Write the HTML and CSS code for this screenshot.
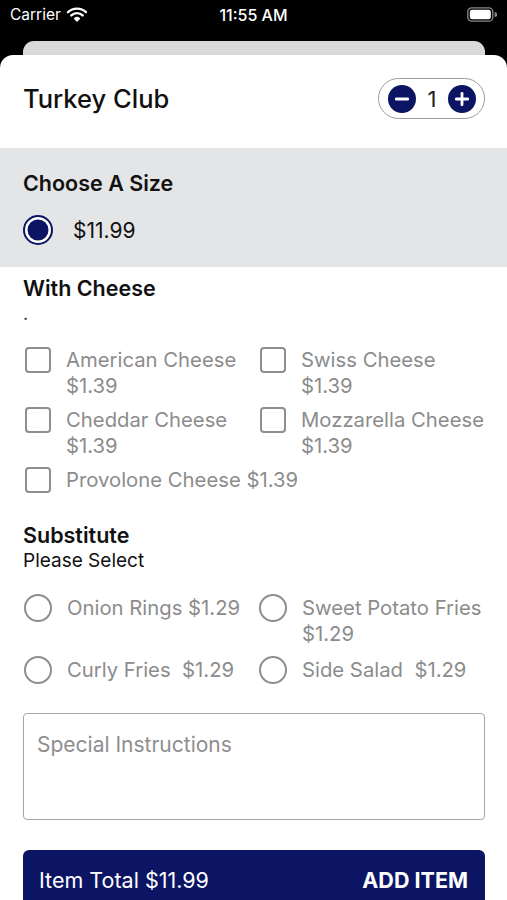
FILE: index.html
```html
<!DOCTYPE html>
<html lang="en">
<head>
  <meta charset="UTF-8">
  <meta name="viewport" content="width=device-width, initial-scale=1.0">
  <title>Turkey Club</title>
  <link rel="stylesheet" href="styles.css">
</head>
<body>
  <div class="status-bar">
    <div class="status-left">
      <span>Carrier</span>
      <svg class="wifi" width="20" height="15" viewBox="0 0 20 15">
        <path d="M1 5.2 A13 13 0 0 1 19 5.2" fill="none" stroke="white" stroke-width="2.4" stroke-linecap="round"/>
        <path d="M4.3 8.4 A8.4 8.4 0 0 1 15.7 8.4" fill="none" stroke="white" stroke-width="2.4" stroke-linecap="round"/>
        <path d="M7.6 11.5 A3.8 3.8 0 0 1 12.4 11.5 L10 14 Z" fill="white" stroke="white" stroke-width="1.4" stroke-linejoin="round"/>
      </svg>
    </div>
    <div class="status-time">11:55 AM</div>
    <div class="status-right">
      <svg width="30" height="15" viewBox="0 0 30 15">
        <rect x="0.8" y="0.8" width="25" height="13.4" rx="4" fill="none" stroke="#8a8a8a" stroke-width="1.3"/>
        <rect x="2.8" y="2.8" width="21" height="9.4" rx="2.2" fill="white"/>
        <path d="M27.6 5 a2.2 2.2 0 0 1 0 5 z" fill="#8a8a8a"/>
      </svg>
    </div>
  </div>

  <div class="back-card"></div>

  <div class="sheet">
    <div class="item-header">
      <h1 class="item-title">Turkey Club</h1>
      <div class="stepper">
        <svg width="28" height="28" viewBox="0 0 28 28">
          <circle cx="14" cy="14" r="14" fill="#0b1563"/>
          <rect x="7" y="12.6" width="14" height="2.8" rx="1.2" fill="white"/>
        </svg>
        <span class="stepper-count">1</span>
        <svg width="28" height="28" viewBox="0 0 28 28">
          <circle cx="14" cy="14" r="14" fill="#0b1563"/>
          <rect x="7" y="12.6" width="14" height="2.8" rx="1.2" fill="white"/>
          <rect x="12.6" y="7" width="2.8" height="14" rx="1.2" fill="white"/>
        </svg>
      </div>
    </div>

    <div class="size-section">
      <h2 class="section-title">Choose A Size</h2>
      <div class="size-option">
        <svg width="30" height="30" viewBox="0 0 30 30">
          <circle cx="15" cy="15" r="14" fill="white" stroke="#0b1563" stroke-width="2"/>
          <circle cx="15" cy="15" r="10.5" fill="#0b1563"/>
        </svg>
        <span>$11.99</span>
      </div>
    </div>

    <div class="options">
      <h2 class="section-title">With Cheese</h2>
      <div class="section-note">.</div>
      <div class="choice-grid cheese-grid">
        <label class="choice"><span class="checkbox"></span><span>American Cheese $1.39</span></label>
        <label class="choice"><span class="checkbox"></span><span>Swiss Cheese $1.39</span></label>
        <label class="choice"><span class="checkbox"></span><span>Cheddar Cheese $1.39</span></label>
        <label class="choice"><span class="checkbox"></span><span>Mozzarella Cheese $1.39</span></label>
        <label class="choice wide"><span class="checkbox"></span><span>Provolone Cheese $1.39</span></label>
      </div>

      <h2 class="section-title substitute-title">Substitute</h2>
      <div class="section-sub">Please Select</div>
      <div class="choice-grid sub-grid">
        <label class="choice"><span class="radio"></span><span>Onion Rings $1.29</span></label>
        <label class="choice"><span class="radio"></span><span>Sweet Potato Fries $1.29</span></label>
        <label class="choice"><span class="radio"></span><span>Curly Fries&nbsp; $1.29</span></label>
        <label class="choice"><span class="radio"></span><span>Side Salad&nbsp; $1.29</span></label>
      </div>

      <textarea class="instructions" placeholder="Special Instructions"></textarea>

      <button class="add-button" type="button">
        <span>Item Total $11.99</span>
        <span class="add-label">ADD ITEM</span>
      </button>
    </div>
  </div>
</body>
</html>
```

FILE: styles.css
```css
html, body {
  margin: 0;
  padding: 0;
  background-color: #000;
  font-family: Inter, "Liberation Sans", sans-serif;
  height: 100%;
  overflow: hidden;
}
.status-bar {
  height: 41px;
  display: flex;
  justify-content: space-between;
  align-items: flex-start;
  padding: 5px 10px 0 10px;
  box-sizing: border-box;
  color: white;
  font-size: 15.5px;
}
.status-left {
  display: flex;
  align-items: center;
  gap: 6px;
  width: 120px;
}
.status-time {
  font-size: 16px;
  font-weight: 500;
}
.status-right {
  width: 120px;
  display: flex;
  justify-content: flex-end;
  padding-top: 2px;
}
.back-card {
  height: 14px;
  margin: 0 22px 0 23px;
  background-color: #d9d9d9;
  border-radius: 11px 11px 0 0;
}
.sheet {
  background-color: white;
  border-radius: 13px 13px 0 0;
}
.item-header {
  display: flex;
  justify-content: space-between;
  align-items: center;
  padding: 23px 22px 29px 23px;
}
.item-title {
  margin: 0;
  font-size: 25.5px;
  font-weight: 500;
  color: #111;
}
.stepper {
  display: flex;
  align-items: center;
  gap: 9px;
  height: 41px;
  box-sizing: border-box;
  padding: 0 8px 0 9px;
  border: 1.5px solid #9c9c9c;
  border-radius: 21px;
}
.stepper-count {
  font-size: 22px;
  color: #222;
  width: 14px;
  text-align: center;
}
.size-section {
  background-color: #e4e5e7;
  padding: 22px 23px 22px 23px;
}
.section-title {
  margin: 0;
  font-size: 21.5px;
  line-height: 26px;
  font-weight: 600;
  color: #111;
}
.size-option {
  display: flex;
  align-items: center;
  gap: 20px;
  margin-top: 19px;
  font-size: 21px;
  color: #111;
}
.options {
  padding: 8px 20px 0 23px;
}
.section-note {
  font-size: 18px;
  line-height: 22px;
  color: #333;
  margin-top: 2px;
}
.choice-grid {
  display: grid;
  grid-template-columns: 235px 1fr;
  margin-left: 2px;
  color: #8c8c8c;
  font-size: 20.3px;
  line-height: 26px;
}
.cheese-grid {
  margin-top: 22px;
  row-gap: 8px;
}
.sub-grid {
  margin-top: 21px;
  row-gap: 10px;
  margin-left: 1px;
}
.choice {
  display: flex;
  align-items: flex-start;
  gap: 15px;
}
.wide {
  grid-column: 1 / 3;
}
.checkbox {
  flex: none;
  width: 26px;
  height: 26px;
  box-sizing: border-box;
  border: 2px solid #8e8e8e;
  border-radius: 4px;
}
.radio {
  flex: none;
  width: 28px;
  height: 28px;
  margin-top: -1px;
  box-sizing: border-box;
  border: 2px solid #8e8e8e;
  border-radius: 50%;
}
.substitute-title {
  margin-top: 29px;
}
.section-sub {
  font-size: 19px;
  line-height: 26px;
  color: #111;
}
.instructions {
  display: block;
  width: calc(100% - 2px);
  height: 107px;
  box-sizing: border-box;
  margin-top: 29px;
  padding: 19px 13px;
  border: 1px solid #a6a6a6;
  border-radius: 4px;
  font-family: inherit;
  font-size: 21px;
  line-height: 24px;
  resize: none;
}
.instructions::placeholder {
  color: #8e8e8e;
}
.add-button {
  display: flex;
  justify-content: space-between;
  align-items: center;
  width: calc(100% - 2px);
  height: 50px;
  margin-top: 30px;
  padding: 10px 17px 0 16px;
  border: none;
  border-radius: 6px 6px 0 0;
  background-color: #0b1563;
  color: white;
  font-family: inherit;
  font-size: 21.5px;
}
.add-label {
  font-weight: 700;
}
```
